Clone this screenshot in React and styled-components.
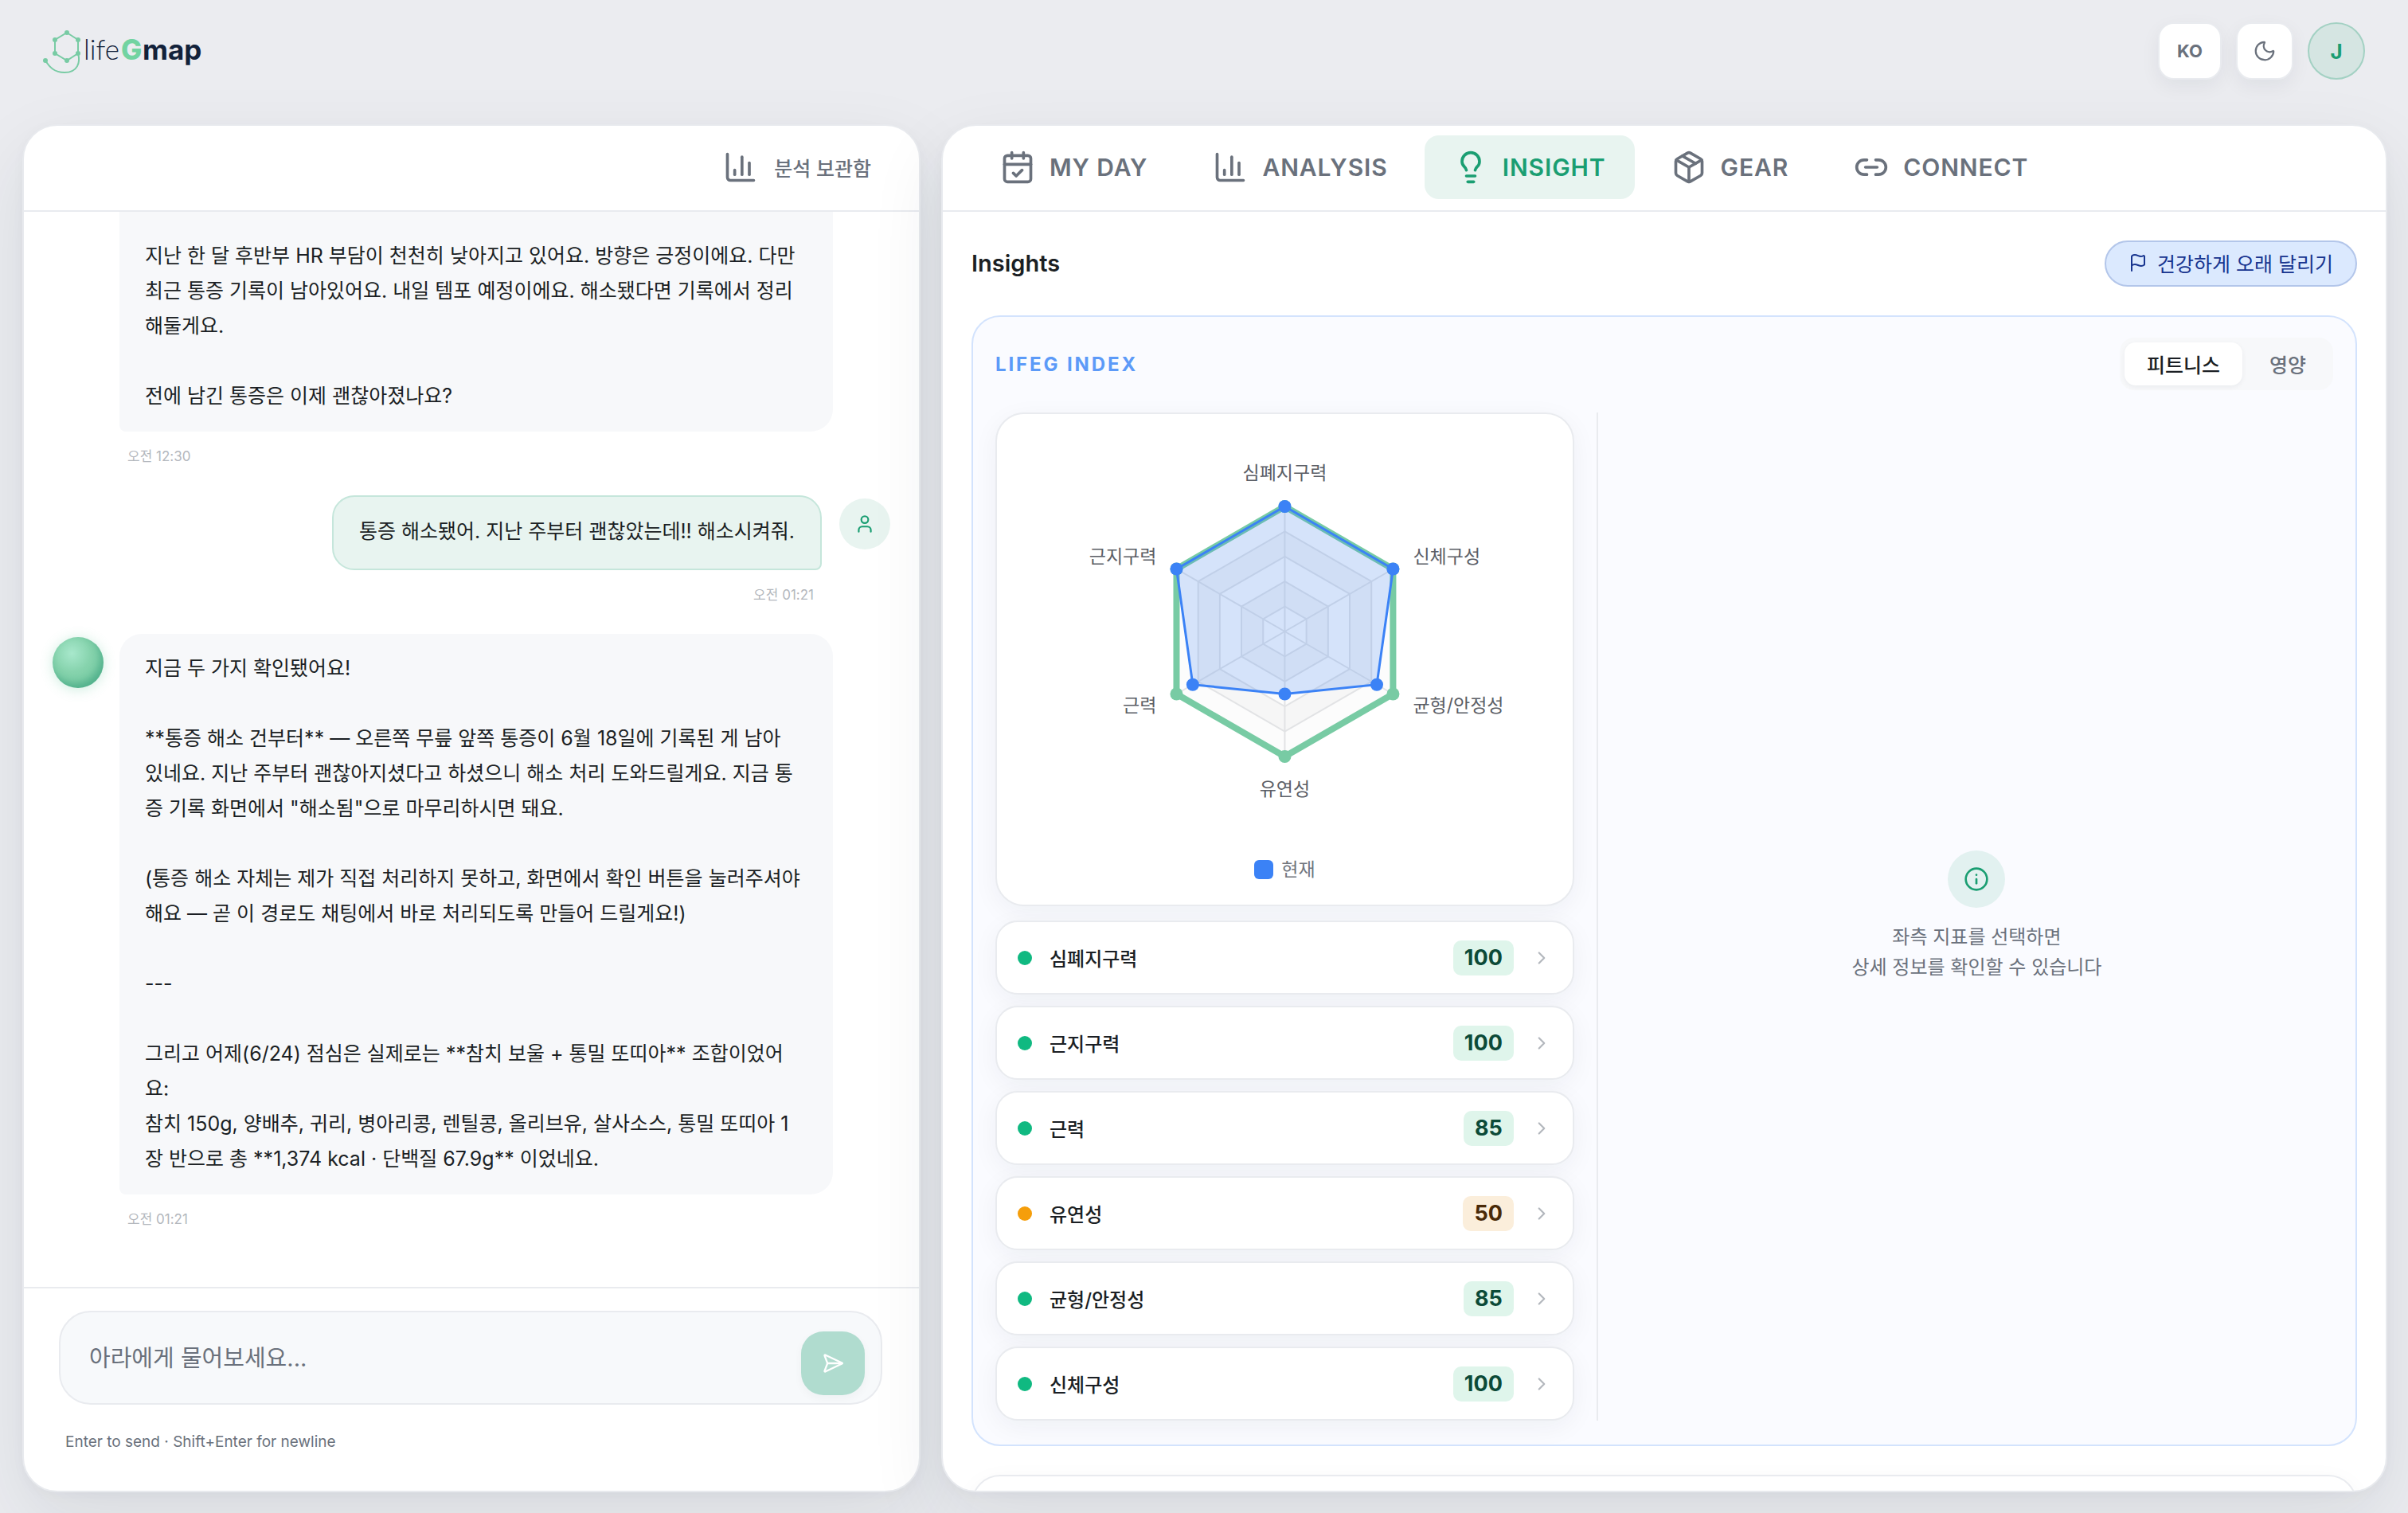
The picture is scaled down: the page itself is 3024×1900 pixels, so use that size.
import React, { useState } from 'react';
import styled, { createGlobalStyle, css } from 'styled-components';
import {
  CalendarCheck,
  ChartColumn,
  ChevronRight,
  Flag,
  Info,
  Lightbulb,
  Link2,
  Moon,
  Package,
  SendHorizontal,
  User,
} from 'lucide-react';

const GlobalStyle = createGlobalStyle`
  * {
    box-sizing: border-box;
  }

  body {
    margin: 0;
    background: #ebecf0;
    color: #1b1f24;
    font-family: Inter, 'Noto Sans CJK KR', sans-serif;
    font-size: 25px;
  }

  button,
  textarea {
    font-family: inherit;
    margin: 0;
  }

  button {
    border: none;
    background: none;
    padding: 0;
    cursor: pointer;
  }
`;

const Page = styled.div`
  display: flex;
  flex-direction: column;
  height: 100vh;
`;

/* ---------- top bar ---------- */

const TopBar = styled.header`
  display: flex;
  align-items: center;
  justify-content: space-between;
  padding: 28px 54px;
`;

const LogoLink = styled.a`
  display: block;
  height: 60px;
`;

const TopActions = styled.div`
  display: flex;
  gap: 18px;
`;

const SquareButton = styled.button`
  display: flex;
  align-items: center;
  justify-content: center;
  width: ${({ $wide }) => ($wide ? '80px' : '72px')};
  height: 72px;
  border: 2px solid #e9ebef;
  border-radius: 20px;
  background: #fff;
  color: #6a717c;
  font-size: 22px;
  font-weight: 700;
  line-height: 28px;
  box-shadow: 0 8px 24px rgba(17, 40, 50, 0.06);
`;

const ProfileButton = styled.button`
  width: 72px;
  height: 72px;
  border: 2px solid #a3d1c3;
  border-radius: 50%;
  background: #d5e5e2;
  color: #1a9e72;
  font-size: 26px;
  font-weight: 700;
`;

/* ---------- panels ---------- */

const Columns = styled.main`
  flex: 1;
  min-height: 0;
  display: grid;
  grid-template-columns: minmax(0, 141fr) minmax(0, 227fr);
  gap: 26px;
  padding: 28px 26px 26px 28px;
`;

const Panel = styled.section`
  display: flex;
  flex-direction: column;
  min-height: 0;
  overflow: hidden;
  border: 2px solid #e8eaee;
  border-radius: 44px;
  background: #fff;
  box-shadow: 0 36px 96px rgba(17, 44, 54, 0.09), 0 4px 16px rgba(17, 44, 54, 0.03);
`;

const PanelHeader = styled.div`
  display: flex;
  align-items: center;
  flex-shrink: 0;
  height: 108px;
  padding: 0 36px 2px;
  border-bottom: 2px solid #e9ebef;
`;

const ChatHeader = styled(PanelHeader)`
  justify-content: flex-end;
  padding: 0 60px 2px;
`;

const ArchiveButton = styled.button`
  display: flex;
  align-items: center;
  gap: 20px;
  color: #6a717c;
  font-size: 25px;
  font-weight: 500;
`;

/* ---------- chat ---------- */

const MessageScroll = styled.div`
  flex: 1;
  min-height: 0;
  display: flex;
  flex-direction: column-reverse;
  overflow-y: auto;
  scrollbar-width: none;
`;

const MessageList = styled.div`
  display: flex;
  flex-direction: column;
  gap: 36px;
  padding: 36px 36px 72px;
`;

const MessageRow = styled.div`
  display: flex;
  align-items: flex-start;
  gap: ${({ $mine }) => ($mine ? '22px' : '20px')};
  flex-direction: ${({ $mine }) => ($mine ? 'row-reverse' : 'row')};
`;

const Orb = styled.div`
  flex-shrink: 0;
  width: 64px;
  height: 64px;
  margin-top: 4px;
  border-radius: 50%;
  background: radial-gradient(circle at 38% 32%, #a8e8cc 0%, #86d3ad 40%, #6cc59a 100%);
  box-shadow: inset -4px -6px 10px rgba(30, 140, 110, 0.4), 0 2px 16px rgba(90, 195, 150, 0.3);
`;

const UserAvatar = styled.div`
  display: flex;
  align-items: center;
  justify-content: center;
  flex-shrink: 0;
  width: 64px;
  height: 64px;
  margin-top: 4px;
  border-radius: 50%;
  background: #e8f4f0;
  color: #1a9e72;
`;

const MessageBody = styled.div`
  display: flex;
  flex-direction: column;
  align-items: ${({ $mine }) => ($mine ? 'flex-end' : 'flex-start')};
  width: 896px;
  max-width: 87%;
`;

const Bubble = styled.div`
  padding: 21px 32px 23px;
  font-size: 25px;
  line-height: 44px;
  white-space: pre-wrap;
  ${({ $mine }) =>
    $mine
      ? css`
          padding-bottom: 25px;
          border: 2px solid #c5e6db;
          border-radius: 28px 28px 8px 28px;
          background: #e8f4f0;
        `
      : css`
          width: 100%;
          border-radius: 28px 28px 28px 8px;
          background: #f7f8fa;
        `}
`;

const Time = styled.time`
  margin-top: 18px;
  padding: 0 10px;
  color: #b3b7bd;
  font-size: 17px;
  line-height: 26px;
`;

const Composer = styled.form`
  flex-shrink: 0;
  padding: 28px 46px 46px 44px;
  border-top: 2px solid #e9ebef;
`;

const InputBox = styled.div`
  display: flex;
  align-items: flex-end;
  padding: 10px 20px 10px 36px;
  border: 2px solid #e9ebef;
  border-radius: 40px;
  background: #f7f9fb;
`;

const MessageInput = styled.textarea`
  flex: 1;
  min-width: 0;
  height: 94px;
  padding: 26px 0 24px;
  border: none;
  outline: none;
  resize: none;
  background: transparent;
  color: #1b1f24;
  font-size: 29px;
  line-height: 44px;

  &::placeholder {
    color: #6a717c;
  }
`;

const SendButton = styled.button`
  display: flex;
  align-items: center;
  justify-content: center;
  width: 80px;
  height: 80px;
  border-radius: 28px;
  background: #b0dccf;
  color: #fff;
  box-shadow: 0 4px 12px rgba(17, 40, 50, 0.04);
`;

const Hint = styled.p`
  margin: 32px 8px 0;
  color: #6a717c;
  font-size: 19px;
  line-height: 30px;
`;

/* ---------- insight panel ---------- */

const Tabs = styled.nav`
  display: flex;
  gap: 10px;
`;

const Tab = styled.button`
  display: flex;
  align-items: center;
  gap: 18px;
  height: 80px;
  padding: 0 36px;
  border-radius: 18px;
  background: ${({ $active }) => ($active ? '#e8f4f0' : 'transparent')};
  color: ${({ $active }) => ($active ? '#1a9e72' : '#6a717c')};
  font-size: 30px;
  font-weight: 600;
  letter-spacing: 0.03em;
`;

const InsightBody = styled.div`
  flex: 1;
  min-height: 0;
  display: flex;
  flex-direction: column;
  gap: 36px;
  padding: 36px;
  overflow-y: auto;
  scrollbar-width: none;
`;

const TitleRow = styled.div`
  display: flex;
  align-items: center;
  justify-content: space-between;
`;

const Title = styled.h1`
  margin: 0;
  font-size: 29px;
  font-weight: 600;
  line-height: 40px;
`;

const GoalButton = styled.button`
  display: flex;
  align-items: center;
  gap: 12px;
  height: 58px;
  padding: 0 28px 2px;
  border: 2px solid #b3c6ea;
  border-radius: 29px;
  background: #dbe9fe;
  color: #17348f;
  font-size: 25px;
  font-weight: 400;
`;

const IndexCard = styled.section`
  flex-shrink: 0;
  padding: 26px 28px 30px;
  border: 2px solid #d3e3fd;
  border-radius: 36px;
  background: #fafbff;
`;

const IndexHead = styled.div`
  display: flex;
  align-items: center;
  justify-content: space-between;
  margin-bottom: 28px;
`;

const IndexLabel = styled.h2`
  margin: 0;
  color: #5c9af8;
  font-size: 24px;
  font-weight: 700;
  letter-spacing: 0.12em;
`;

const Segmented = styled.div`
  display: flex;
  gap: 6px;
  padding: 6px;
  border-radius: 18px;
  background: #f7f8fa;
`;

const Segment = styled.button`
  height: 54px;
  padding: 0 28px;
  border-radius: 14px;
  background: ${({ $active }) => ($active ? '#fff' : 'transparent')};
  color: ${({ $active }) => ($active ? '#1b1f24' : '#6a717c')};
  font-size: 25px;
  font-weight: 500;
  box-shadow: ${({ $active }) => ($active ? '0 2px 6px rgba(17, 40, 50, 0.06)' : 'none')};
`;

const IndexGrid = styled.div`
  display: grid;
  grid-template-columns: minmax(0, 11fr) minmax(0, 14fr);
  gap: 28px;
`;

const IndexColumn = styled.div`
  display: flex;
  flex-direction: column;
  gap: 18px;
`;

const ChartCard = styled.figure`
  margin: 0;
  padding-bottom: 32px;
  border: 2px solid #e9ebef;
  border-radius: 36px;
  background: #fff;
  box-shadow: 0 8px 32px rgba(17, 40, 50, 0.05);
`;

const ChartSvg = styled.svg`
  display: block;
  width: 100%;
  height: 560px;

  text {
    fill: #5b5e66;
    font-size: 23px;
  }
`;

const Legend = styled.figcaption`
  display: flex;
  align-items: center;
  justify-content: center;
  gap: 10px;
  color: #71757d;
  font-size: 23px;
  line-height: 24px;
`;

const LegendSwatch = styled.span`
  width: 24px;
  height: 24px;
  border-radius: 6px;
  background: #3b82f6;
`;

const MetricList = styled.ul`
  display: flex;
  flex-direction: column;
  gap: 14px;
  margin: 0;
  padding: 0;
  list-style: none;
`;

const MetricButton = styled.button`
  display: flex;
  align-items: center;
  gap: 22px;
  width: 100%;
  min-height: 93px;
  padding: 0 26px;
  border: 2px solid #e9ebef;
  border-radius: 28px;
  background: #fff;
  color: #b3b7bd;
  text-align: left;
  box-shadow: 0 8px 32px rgba(17, 40, 50, 0.05);
`;

const Dot = styled.span`
  width: 18px;
  height: 18px;
  border-radius: 50%;
  background: ${({ $warn }) => ($warn ? '#f59e0b' : '#10b981')};
`;

const MetricName = styled.span`
  flex: 1;
  color: #1b1f24;
  font-size: 24px;
  font-weight: 500;
`;

const Score = styled.span`
  padding: 0 14px;
  border-radius: 10px;
  background: ${({ $warn }) => ($warn ? '#fbeedb' : '#dff5eb')};
  color: ${({ $warn }) => ($warn ? '#4a2a08' : '#0c4a38')};
  font-size: 27px;
  font-weight: 700;
  line-height: 44px;
`;

const DetailPane = styled.div`
  display: flex;
  flex-direction: column;
  align-items: center;
  justify-content: center;
  gap: 18px;
  padding-left: 28px;
  border-left: 2px solid #e9ebef;
`;

const InfoCircle = styled.div`
  display: flex;
  align-items: center;
  justify-content: center;
  width: 72px;
  height: 72px;
  border-radius: 50%;
  background: #e2f1f0;
  color: #1a9e72;
`;

const DetailText = styled.p`
  margin: 0;
  color: #6a717c;
  font-size: 24px;
  line-height: 38px;
  text-align: center;
`;

const NextCard = styled.section`
  flex-shrink: 0;
  height: 400px;
  border: 2px solid #e9ebef;
  border-radius: 36px;
  background: #fff;
  box-shadow: 0 8px 32px rgba(17, 40, 50, 0.04);
`;

const tabs = [
  { id: 'MY DAY', icon: CalendarCheck },
  { id: 'ANALYSIS', icon: ChartColumn },
  { id: 'INSIGHT', icon: Lightbulb },
  { id: 'GEAR', icon: Package },
  { id: 'CONNECT', icon: Link2 },
];

const metrics = [
  { name: '심폐지구력', score: 100 },
  { name: '근지구력', score: 100 },
  { name: '근력', score: 85 },
  { name: '유연성', score: 50 },
  { name: '균형/안정성', score: 85 },
  { name: '신체구성', score: 100 },
];

const messages = [
  {
    id: 1,
    time: '오전 12:30',
    text: `


지난 한 달 후반부 HR 부담이 천천히 낮아지고 있어요. 방향은 긍정이에요. 다만
최근 통증 기록이 남아있어요. 내일 템포 예정이에요. 해소됐다면 기록에서 정리
해둘게요.

전에 남긴 통증은 이제 괜찮아졌나요?`,
  },
  {
    id: 2,
    mine: true,
    time: '오전 01:21',
    text: '통증 해소됐어. 지난 주부터 괜찮았는데!! 해소시켜줘.',
  },
  {
    id: 3,
    time: '오전 01:21',
    text: `지금 두 가지 확인됐어요!

**통증 해소 건부터** — 오른쪽 무릎 앞쪽 통증이 6월 18일에 기록된 게 남아
있네요. 지난 주부터 괜찮아지셨다고 하셨으니 해소 처리 도와드릴게요. 지금 통
증 기록 화면에서 "해소됨"으로 마무리하시면 돼요.

(통증 해소 자체는 제가 직접 처리하지 못하고, 화면에서 확인 버튼을 눌러주셔야
해요 — 곧 이 경로도 채팅에서 바로 처리되도록 만들어 드릴게요!)

---

그리고 어제(6/24) 점심은 실제로는 **참치 보울 + 통밀 또띠아** 조합이었어
요:
참치 150g, 양배추, 귀리, 병아리콩, 렌틸콩, 올리브유, 살사소스, 통밀 또띠아 1
장 반으로 총 **1,374 kcal · 단백질 67.9g** 이었네요.`,
  },
];

// radar axes, clockwise from the top
const axes = [
  { name: '심폐지구력', value: 100, x: 0, y: -191, anchor: 'middle' },
  { name: '신체구성', value: 100, x: 161, y: -86, anchor: 'start' },
  { name: '균형/안정성', value: 85, x: 161, y: 101, anchor: 'start' },
  { name: '유연성', value: 50, x: 0, y: 206, anchor: 'middle' },
  { name: '근력', value: 85, x: -161, y: 101, anchor: 'end' },
  { name: '근지구력', value: 100, x: -161, y: -86, anchor: 'end' },
];

const RADIUS = 157;

const point = (index, percent) => {
  const angle = (Math.PI / 3) * index - Math.PI / 2;
  const r = (RADIUS * percent) / 100;
  return [r * Math.cos(angle), r * Math.sin(angle)];
};

const ring = (percent) => axes.map((_, i) => point(i, percent).join(',')).join(' ');

function RadarChart() {
  return (
    <ChartSvg viewBox="-361 -273 722 560" role="img" aria-label="LifeG index">
      {[100, 80, 60, 40, 20].map((p, i) => (
        <polygon
          key={p}
          points={ring(p)}
          fill={i % 2 ? '#f6f6f6' : '#fcfcfc'}
          stroke="#e2e3e5"
          strokeWidth="2"
        />
      ))}
      {axes.map((axis, i) => {
        const [x, y] = point(i, 100);
        return <line key={axis.name} x1="0" y1="0" x2={x} y2={y} stroke="#e2e3e5" strokeWidth="2" />;
      })}
      <polygon points={ring(100)} fill="none" stroke="#78cba4" strokeWidth="8" strokeLinejoin="round" />
      {axes.map((axis, i) => {
        const [x, y] = point(i, 100);
        return <circle key={axis.name} cx={x} cy={y} r="8" fill="#78cba4" />;
      })}
      <polygon
        points={axes.map((axis, i) => point(i, axis.value).join(',')).join(' ')}
        fill="#3b82f6"
        fillOpacity="0.2"
        stroke="#3b82f6"
        strokeWidth="3"
      />
      {axes.map((axis, i) => {
        const [x, y] = point(i, axis.value);
        return <circle key={axis.name} cx={x} cy={y} r="8" fill="#3b82f6" />;
      })}
      {axes.map((axis) => (
        <text key={axis.name} x={axis.x} y={axis.y} textAnchor={axis.anchor}>
          {axis.name}
        </text>
      ))}
    </ChartSvg>
  );
}

function Logo() {
  const nodes = [
    [30, 7],
    [44, 16],
    [44, 33],
    [30, 42],
    [15, 33],
    [15, 16],
  ];
  return (
    <svg width="210" height="60" viewBox="0 0 210 60" role="img" aria-label="lifeGmap">
      <g fill="none" stroke="#78cba4" strokeWidth="2">
        <polygon points={nodes.map((n) => n.join(',')).join(' ')} />
        <path d="M44 33 C47 44 44 57 27 57 C14 57 8 50 3 42" />
      </g>
      <g fill="#78cba4">
        {nodes.map(([x, y]) => (
          <circle key={`${x}-${y}`} cx={x} cy={y} r="3" />
        ))}
        <circle cx="3" cy="42" r="3" />
      </g>
      <g fontSize="35">
        <text x="51" y="41" fill="#12213a" fontFamily="Lato, sans-serif" fontWeight="300">life</text>
        <text x="98" y="41" fill="#72d3a1" fontWeight="800">G</text>
        <text x="125" y="41" fill="#12213a" fontWeight="700">map</text>
      </g>
    </svg>
  );
}

function Chat() {
  const [draft, setDraft] = useState('');

  return (
    <Panel aria-label="Chat">
      <ChatHeader>
        <ArchiveButton type="button">
          <ChartColumn size={44} />
          분석 보관함
        </ArchiveButton>
      </ChatHeader>
      <MessageScroll>
        <MessageList>
          {messages.map((m) => (
            <MessageRow key={m.id} $mine={m.mine}>
              {m.mine ? (
                <UserAvatar>
                  <User size={26} />
                </UserAvatar>
              ) : (
                <Orb />
              )}
              <MessageBody $mine={m.mine}>
                <Bubble $mine={m.mine}>{m.text}</Bubble>
                <Time>{m.time}</Time>
              </MessageBody>
            </MessageRow>
          ))}
        </MessageList>
      </MessageScroll>
      <Composer onSubmit={(e) => e.preventDefault()}>
        <InputBox>
          <MessageInput
            aria-label="메시지"
            placeholder="아라에게 물어보세요..."
            value={draft}
            onChange={(e) => setDraft(e.target.value)}
          />
          <SendButton type="submit" aria-label="Send">
            <SendHorizontal size={28} />
          </SendButton>
        </InputBox>
        <Hint>Enter to send · Shift+Enter for newline</Hint>
      </Composer>
    </Panel>
  );
}

function Insight() {
  const [tab, setTab] = useState('INSIGHT');
  const [segment, setSegment] = useState('피트니스');

  return (
    <Panel aria-label="Insights">
      <PanelHeader>
        <Tabs>
          {tabs.map(({ id, icon: Icon }) => (
            <Tab key={id} type="button" $active={tab === id} onClick={() => setTab(id)}>
              <Icon size={44} />
              {id}
            </Tab>
          ))}
        </Tabs>
      </PanelHeader>
      <InsightBody>
        <TitleRow>
          <Title>Insights</Title>
          <GoalButton type="button">
            <Flag size={24} />
            건강하게 오래 달리기
          </GoalButton>
        </TitleRow>
        <IndexCard>
          <IndexHead>
            <IndexLabel>LIFEG INDEX</IndexLabel>
            <Segmented>
              {['피트니스', '영양'].map((s) => (
                <Segment key={s} type="button" $active={segment === s} onClick={() => setSegment(s)}>
                  {s}
                </Segment>
              ))}
            </Segmented>
          </IndexHead>
          <IndexGrid>
            <IndexColumn>
              <ChartCard>
                <RadarChart />
                <Legend>
                  <LegendSwatch />
                  현재
                </Legend>
              </ChartCard>
              <MetricList>
                {metrics.map(({ name, score }) => (
                  <li key={name}>
                    <MetricButton type="button">
                      <Dot $warn={score < 70} />
                      <MetricName>{name}</MetricName>
                      <Score $warn={score < 70}>{score}</Score>
                      <ChevronRight size={26} />
                    </MetricButton>
                  </li>
                ))}
              </MetricList>
            </IndexColumn>
            <DetailPane>
              <InfoCircle>
                <Info size={32} />
              </InfoCircle>
              <DetailText>
                좌측 지표를 선택하면
                <br />
                상세 정보를 확인할 수 있습니다
              </DetailText>
            </DetailPane>
          </IndexGrid>
        </IndexCard>
        <NextCard />
      </InsightBody>
    </Panel>
  );
}

export default function App() {
  return (
    <>
      <GlobalStyle />
      <Page>
        <TopBar>
          <LogoLink href="#">
            <Logo />
          </LogoLink>
          <TopActions>
            <SquareButton type="button" $wide>
              KO
            </SquareButton>
            <SquareButton type="button" aria-label="Dark mode">
              <Moon size={30} strokeWidth={1.8} />
            </SquareButton>
            <ProfileButton type="button">J</ProfileButton>
          </TopActions>
        </TopBar>
        <Columns>
          <Chat />
          <Insight />
        </Columns>
      </Page>
    </>
  );
}
